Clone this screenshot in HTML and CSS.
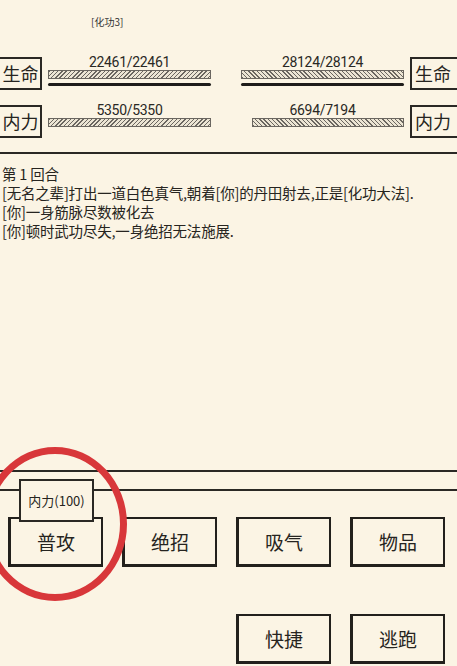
FILE: index.html
```html
<!DOCTYPE html>
<html>
<head>
	<meta charset="UTF-8">
	<title>战斗</title>
	<link rel="stylesheet" href="styles.css">
</head>
<body>
	<!-- 对手状态 -->
	<div class="title">[化功3]</div>
	<div class="stats">
		<div class="row">
			<div class="tag tag-l">生命</div>
			<div class="cell cell-l">
				<div class="num">22461/22461</div>
				<div class="bar"><div class="fill fill-l" style="width:100%"></div></div>
				<div class="line"></div>
			</div>
			<div class="cell cell-r">
				<div class="num">28124/28124</div>
				<div class="bar"><div class="fill fill-r" style="width:100%"></div></div>
				<div class="line"></div>
			</div>
			<div class="tag tag-r">生命</div>
		</div>
		<div class="row">
			<div class="tag tag-l">内力</div>
			<div class="cell cell-l">
				<div class="num">5350/5350</div>
				<div class="bar"><div class="fill fill-l" style="width:100%"></div></div>
			</div>
			<div class="cell cell-r">
				<div class="num">6694/7194</div>
				<div class="bar"><div class="fill fill-r" style="width:93%"></div></div>
			</div>
			<div class="tag tag-r">内力</div>
		</div>
	</div>
	<!-- 战斗记录 -->
	<div class="log">
		<p>第 1 回合</p>
		<p>[无名之辈]打出一道白色真气,朝着[你]的丹田射去,正是[化功大法].</p>
		<p>[你]一身筋脉尽数被化去</p>
		<p>[你]顿时武功尽失,一身绝招无法施展.</p>
	</div>
	<!-- 操作按钮 -->
	<div class="actions">
		<div class="btn first">普攻
			<div class="tip">内力(100)</div>
		</div>
		<div class="btn">绝招</div>
		<div class="btn">吸气</div>
		<div class="btn">物品</div>
		<div class="btn col3">快捷</div>
		<div class="btn">逃跑</div>
		<div class="ring"></div>
	</div>
</body>
</html>
```

FILE: styles.css
```css
html,body{margin:0;padding:0;}
body{background:#fbf4e4;color:#262420;font-family:"Noto Sans CJK SC",sans-serif;width:457px;height:666px;overflow:hidden;}
p{margin:0;}
.title{font-size:10px;line-height:14px;padding:15px 0 0 91px;color:#333;}
.stats{margin:26px -5px 0 -5px;}
.row{display:flex;align-items:flex-start;height:35px;margin-bottom:13px;}
.tag{height:33px;margin-top:2px;box-sizing:border-box;border:2px solid #2a2824;font-size:18px;line-height:29px;text-align:center;}
.tag-l{width:47px;padding-left:4px;}
.tag-r{width:52px;margin-left:6px;padding-right:6px;}
.cell{width:163px;}
.cell-l{margin-left:6px;}
.cell-r{margin-left:30px;}
.num{font-family:Roboto,"Noto Sans CJK SC",sans-serif;font-size:14px;line-height:14px;text-align:center;letter-spacing:-0.3px;color:#2a2824;}
.bar{height:9px;margin-top:1px;display:flex;}
.fill{height:9px;box-sizing:border-box;border:1px solid #6a6660;}
.fill-l{background:repeating-linear-gradient(135deg,#6a6660 0 1px,#ece5d4 1px 3px);}
.fill-r{margin-left:auto;background:repeating-linear-gradient(45deg,#6a6660 0 1px,#ece5d4 1px 3px);}
.line{height:3px;margin-top:4px;background:#1e1c1a;border-radius:2px;}
.log{height:320px;box-sizing:border-box;margin-top:14px;border-top:2px solid #2a2824;border-bottom:2px solid #2a2824;padding:10px 0 0 2px;font-size:14.5px;line-height:19px;letter-spacing:-0.2px;}
.actions{position:relative;margin-top:17px;border-top:2px solid #2a2824;padding:26px 0 0 8px;display:grid;grid-template-columns:repeat(4,95px);column-gap:19px;row-gap:47px;}
.btn{position:relative;height:50px;box-sizing:border-box;border:2px solid #22201c;border-bottom-width:3px;border-left-width:3px;font-size:19px;line-height:45px;text-align:center;}
.col3{grid-column:3;}
.tip{position:absolute;left:8px;top:-40px;width:75px;height:43px;box-sizing:border-box;background:#fbf4e4;border:2px solid #2a2824;font-size:13px;line-height:39px;text-align:center;}
.ring{position:absolute;left:-17px;top:-44px;width:144px;height:154px;box-sizing:border-box;border:7px solid #d8373a;border-radius:50%;}
```
